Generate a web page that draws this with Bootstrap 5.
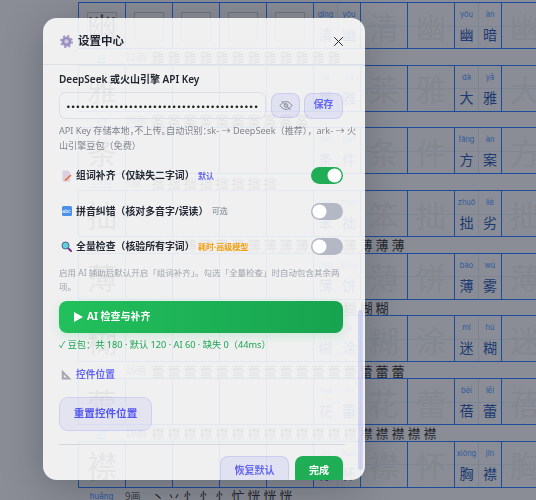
<!DOCTYPE html>
<html lang="zh">
<head>
<meta charset="utf-8">
<title>设置中心</title>
<link rel="stylesheet" href="https://cdn.jsdelivr.net/npm/bootstrap@5.3.0/dist/css/bootstrap.min.css">
<style>
html,body{height:100%;}
body{background:#8a8d95;overflow:hidden;font-family:"Noto Sans","Noto Sans CJK SC",sans-serif;position:relative;width:536px;height:500px;}
.sheet{margin-top:-14px;margin-left:78px;width:458px;overflow:hidden;font-family:"Noto Sans CJK SC",sans-serif;}
.strokes{height:15.7px;display:flex;align-items:center;white-space:nowrap;font-size:13px;line-height:1;color:#23252b;}
.strokes:first-child{height:16px;}
.py-word{width:47px;text-align:center;font:8px Inter,sans-serif;color:#2a5aa6;text-decoration:underline;text-underline-offset:2px;}
.stroke-count{width:25px;text-align:left;font-size:10px;color:#3b4048;}
.stroke-list{display:flex;}
.stroke-list span{width:16px;text-align:center;}
.gridrow{display:flex;height:47px;border-top:1.5px solid #1d4c9a;border-bottom:1.5px solid #1d4c9a;}
.cell{flex:0 0 47px;position:relative;border-left:1.5px solid #1d4c9a;display:flex;}
.cell::before{content:"";position:absolute;left:0;right:0;top:50%;border-top:1px solid #7f8792;}
.sub{flex:1 1 50%;display:flex;flex-direction:column;align-items:center;position:relative;}
.sub+.sub{border-left:1px solid #7a8494;}
.pin{font:7.5px/1 Inter,sans-serif;color:#2c5aa0;margin-top:8px;height:9px;}
.chr{font-size:14px;line-height:1;color:#1a3b74;margin-top:7px;}
.big{position:absolute;inset:0;display:flex;align-items:center;justify-content:center;font-size:30px;line-height:1;color:#84878f;}
.big.dark{color:#3a3c42;}
.cell.boxed::after{content:"";position:absolute;left:8px;right:8px;top:9px;bottom:7px;border:1px solid #70757f;}
.settings{position:absolute;left:43px;top:18px;width:322px;height:462px;border-radius:14px;overflow:hidden;background:rgba(255,255,255,.87);backdrop-filter:blur(.6px);box-shadow:0 8px 40px rgba(20,24,40,.28);color:#1f2430;}
.settings-head{height:47px;padding:0 21px 0 17px;border-bottom:1px solid rgba(200,205,220,.45);}
.settings-title{font-size:11.5px;font-weight:700;margin-left:5px;}
.close-x{background:none;border:0;padding:0;width:11px;height:11px;display:flex;}
.settings-body{padding:8px 22px 0 16px;}
.field-label{font-size:10px;font-weight:600;line-height:13px;margin-bottom:6px;color:#20242e;}
.key-input{width:207px;height:27px;flex:none;padding:0 6px;font-family:Inter,sans-serif;font-size:8.4px;letter-spacing:.1px;border:1px solid rgba(190,195,215,.4);border-radius:7px;background:rgba(255,255,255,.08);color:#222;outline:0;}
.soft-btn{background:rgba(99,102,241,.11);border:1px solid rgba(99,102,241,.17);border-radius:8px;color:#6366f1;font-weight:700;display:flex;align-items:center;justify-content:center;padding:0;}
.eye-btn{width:29px;height:25px;margin-left:5px;}
.save-btn{width:39px;height:26px;margin-left:4px;font-size:9.8px;}
.help-text{font-size:9.1px;line-height:15px;color:#81848d;margin:4px 0 0;white-space:nowrap;}
.punct-trim{font-feature-settings:"halt";}
.opt-row{height:35.5px;}
.opt-first{margin-top:5px;}
.opt-text{font-size:9.9px;font-weight:600;color:#262a35;white-space:nowrap;margin-left:4px;}
.tag{font-size:8px;font-weight:700;margin-left:3.5px;white-space:nowrap;}
.tag-indigo{color:#6366f1;}
.tag-gray{color:#93969f;font-weight:500;}
.tag-amber{color:#f59e0b;}
.opt-icon{width:11px;height:11px;flex:none;margin-left:2px;display:flex;align-items:center;justify-content:center;}
.abc-ico{background:#4a90e8;border-radius:1.5px;color:#fff;font-size:5px;line-height:10px;text-align:center;width:10px;height:10px;font-weight:500;}
.form-switch .sw{width:32px;height:17px;margin:0;float:none;border:0;background-color:#b4b8c5;background-image:url("data:image/svg+xml,%3csvg xmlns='http://www.w3.org/2000/svg' viewBox='-4 -4 8 8'%3e%3ccircle r='3.3' fill='%23fff'/%3e%3c/svg%3e");box-shadow:none;}
.form-switch .sw:checked{background-color:#1fae55;}
.form-check.sw-wrap{padding:0;margin:0 0 0 auto;min-height:0;display:flex;}
.hint-text{font-size:8.5px;line-height:14.5px;color:#a0a3ac;margin:1px 0 0;white-space:nowrap;}
.run-btn{width:100%;height:32px;margin-top:6px;border:0;border-radius:8px;background:linear-gradient(90deg,#22c05c,#17a34f);color:#fff;font-size:10px;font-weight:700;display:flex;align-items:center;padding:0 0 0 15px;box-shadow:0 3px 10px rgba(34,192,92,.18);}
.run-btn span{margin-left:4px;}
.status-text{font-size:9.2px;line-height:12px;color:#1ca653;margin-top:6px;white-space:nowrap;}
.sect-title{font-size:9.75px;font-weight:700;color:#6366f1;margin-top:17px;line-height:13px;}
.sect-gap{margin-left:2px;}
.reset-btn{width:93px;height:34px;margin-top:16px;font-size:10.6px;border-radius:9px;background:rgba(99,102,241,.085);color:#5558ee;}
.settings-foot{margin:13px 0 0 16px;width:286px;border-top:1px solid rgba(190,195,210,.55);padding-top:11px;padding-left:161px;}
.restore-btn{width:69px;height:30px;font-size:10px;flex:none;}
.done-btn{width:48px;height:30px;margin-left:6px;flex:none;font-size:10px;font-weight:700;background:#1fae55;color:#fff;border:0;border-radius:8px;padding:0;}
.scroll-thumb{position:absolute;right:2px;top:292px;width:5px;height:160px;border-radius:3px;background:rgba(99,102,241,.2);}
</style>
</head>
<body>
<div class="sheet" id="sheet"></div>

<div class="settings d-flex flex-column" role="dialog">
  <div class="settings-head d-flex align-items-center flex-shrink-0">
    <svg width="13" height="13" viewBox="0 0 24 24"><circle cx="12" cy="12" r="6.500" fill="#cfc9e0" stroke="#9a90c0" stroke-width="5"/><circle cx="12" cy="12" r="10" fill="none" stroke="#a79cc9" stroke-width="4" stroke-dasharray="4 3.85"/></svg>
    <span class="settings-title">设置中心</span>
    <button class="close-x ms-auto" type="button" aria-label="关闭"><svg width="11" height="11" viewBox="0 0 11 11"><path d="M1.2 1.2 9.8 9.8M9.8 1.2 1.2 9.8" stroke="#23262e" stroke-width="1" fill="none"/></svg></button>
  </div>
  <div class="settings-body flex-shrink-0">
    <div class="field-label">DeepSeek 或火山引擎 API Key</div>
    <div class="d-flex align-items-center">
      <input class="key-input" type="password" value="sk-0123456789abcdef0123456789abcdef0123456789abcdef012">
      <button class="soft-btn eye-btn" type="button" aria-label="显示"><svg width="14" height="11" viewBox="0 0 14 11" fill="none" stroke="#7f8290" stroke-width=".9"><path d="M1 5.5C3 2.6 5 1.6 7 1.6s4 1 6 3.9C11 8.4 9 9.4 7 9.4S3 8.4 1 5.5Z"/><circle cx="7" cy="5.5" r="1.8"/><path d="M2.5.8 11.8 10.2"/></svg></button>
      <button class="soft-btn save-btn" type="button">保存</button>
    </div>
    <p class="help-text"><span class="punct-trim">API Key 存储本地，不上传。自动识别：</span>sk- → DeepSeek（推荐），ark- → 火<br>山引擎豆包（免费）</p>

    <div class="opt-row opt-first d-flex align-items-center">
      <span class="opt-icon"><svg width="11" height="12" viewBox="0 0 11 12"><path d="M1.5.5h5.5l2 2v9h-7.500z" fill="#d9cfe0"/><path d="M4 9.500 9.500 4.500l1 1L5 10.800l-1.500.2z" fill="#ef6b35"/></svg></span>
      <span class="opt-text">组词补齐（仅缺失二字词）</span><span class="tag tag-indigo">默认</span>
      <div class="form-check form-switch sw-wrap"><input class="form-check-input sw" type="checkbox" role="switch" checked></div>
    </div>
    <div class="opt-row d-flex align-items-center">
      <span class="opt-icon"><span class="abc-ico">abc</span></span>
      <span class="opt-text">拼音纠错（核对多音字/误读）</span><span class="tag tag-gray">可选</span>
      <div class="form-check form-switch sw-wrap"><input class="form-check-input sw" type="checkbox" role="switch"></div>
    </div>
    <div class="opt-row d-flex align-items-center">
      <span class="opt-icon"><svg width="11" height="11" viewBox="0 0 11 11"><path d="M6.500 6.500 10 10" stroke="#7a2e8e" stroke-width="2" stroke-linecap="round"/><circle cx="4.500" cy="4.500" r="3.500" fill="#5fd0dc" stroke="#4a5f8e" stroke-width="1"/></svg></span>
      <span class="opt-text">全量检查（核验所有字词）</span><span class="tag tag-amber">耗时·高级模型</span>
      <div class="form-check form-switch sw-wrap"><input class="form-check-input sw" type="checkbox" role="switch"></div>
    </div>
    <p class="hint-text">启用 AI 辅助后默认开启「组词补齐」。勾选「全量检查」时自动包含其余两<br>项。</p>
    <button class="run-btn" type="button"><svg width="9" height="10" viewBox="0 0 9 10"><path d="M0 0 9 5 0 10z" fill="#fff"/></svg><span>AI 检查与补齐</span></button>
    <div class="status-text">✓ 豆包：共 180 · 默认 120 · AI 60 · 缺失 0（44ms）</div>
    <div class="sect-title d-flex align-items-center"><span class="opt-icon"><svg width="11" height="11" viewBox="0 0 11 11"><path fill-rule="evenodd" d="M.8.8 10.500 10.500H.8zM2.800 5.500v3h3z" fill="#a5a6ae"/></svg></span><span class="ms-1">控件位置</span></div>
    <button class="soft-btn reset-btn" type="button">重置控件位置</button>
  </div>
  <div class="settings-foot d-flex flex-shrink-0">
    <button class="soft-btn restore-btn" type="button">恢复默认</button>
    <button class="done-btn" type="button">完成</button>
  </div>
  <div class="scroll-thumb"></div>
</div>

<script>
var rows=[
 {s:'',n:'',b:['幽','','','',''],w:['qīng','yōu','清','幽'],t:['清','幽'],w2:['yōu','àn','幽','暗'],e:'幽'},
 {s:'雅',n:'12画',py:'yǎ',b:['雅','','','',''],w:['lái','yǎ','莱','雅'],t:['莱','雅'],w2:['dà','yǎ','大','雅'],e:'大'},
 {s:'案',n:'10画',py:'àn',b:['条','','','',''],w:['tiáo','jiàn','条','件'],t:['条','件'],w2:['fāng','àn','方','案'],e:'方'},
 {s:'拙',n:'8画',py:'zhuō',b:['拙','','','',''],w:['bèn','zhuō','笨','拙'],t:['笨','拙'],w2:['zhuō','liè','拙','劣'],e:'拙'},
 {s:'薄',n:'16画',py:'báo',b:['薄','','','',''],w:['báo','bǐng','薄','饼'],t:['薄','饼'],w2:['báo','wù','薄','雾'],e:'薄'},
 {s:'糊',n:'15画',py:'hú',b:['糊','','','',''],w:['hú','tu','糊','涂'],t:['糊','涂'],w2:['mí','hú','迷','糊'],e:'迷'},
 {s:'蕾',n:'16画',py:'lěi',b:['蕾','','','',''],w:['huā','lěi','花','蕾'],t:['花','蕾'],w2:['bèi','lěi','蓓','蕾'],e:'蓓'},
 {s:'襟',n:'18画',py:'jīn',b:['襟','','','',''],w:['jīn','huái','襟','怀'],t:['襟','怀'],w2:['xiōng','jīn','胸','襟'],e:'胸'}
];
function word(a){return '<div class="cell"><div class="sub"><div class="pin">'+a[0]+'</div><div class="chr">'+a[2]+'</div></div><div class="sub"><div class="pin">'+a[1]+'</div><div class="chr">'+a[3]+'</div></div></div>';}
function big(t,d,box){return '<div class="cell'+(box?' boxed':'')+'"><div class="big'+(d?' dark':'')+'">'+t+'</div></div>';}
function strokes(py,n,chars){return '<div class="strokes"><div class="py-word">'+(py||'')+'</div><div class="stroke-count">'+(n||'')+'</div><div class="stroke-list">'+chars.map(function(x){return '<span>'+x+'</span>';}).join('')+'</div></div>';}
var counts=[0,12,10,8,16,15,16,18];
var h='';
rows.forEach(function(r,i){
  var list=[];for(var k=0;k<counts[i];k++)list.push(r.s);
  h+=strokes(r.py,r.n,list);
  h+='<div class="gridrow">';
  r.b.forEach(function(t,j){h+=big(t,j==0,i==0);});
  h+=word(r.w)+big(r.t[0])+big(r.t[1])+word(r.w2)+big(r.e)+'</div>';
});
h+=strokes('huǎng','9画',['丶','丷','忄','忄','忄','忙','恍','恍','恍']);
document.getElementById('sheet').innerHTML=h;
</script>
<script src="https://cdn.jsdelivr.net/npm/bootstrap@5.3.0/dist/js/bootstrap.bundle.min.js"></script>
</body>
</html>
